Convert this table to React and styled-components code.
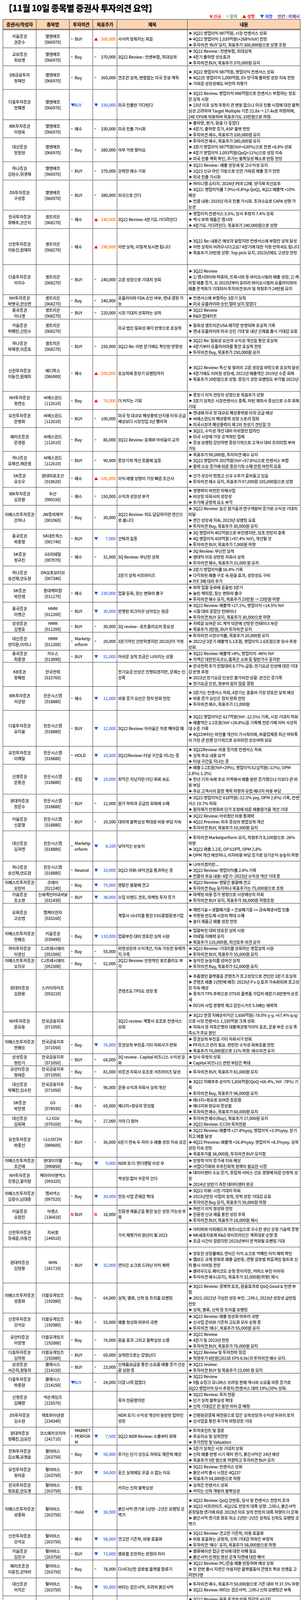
import React from 'react';
import styled, { createGlobalStyle } from 'styled-components';

const LH = 15.34;
const COLS = '85px 85px 60px 62px 180px 1fr';

const GlobalStyle = createGlobalStyle`
  *, *::before, *::after { box-sizing: border-box; }
  html, body { margin: 0; padding: 0; background: #fff; }
  body {
    font-family: "Noto Sans CJK KR", "Noto Sans", sans-serif;
    color: #000;
  }
`;

const Page = styled.div`
  width: 773px;
  padding: 0 4px 6px 7px;
`;

const TitleBar = styled.h1`
  margin: 0;
  height: 34px;
  padding: 4px 0 0 3px;
  font-size: 22px;
  line-height: 30px;
  font-weight: 900;
  letter-spacing: -0.6px;
  color: #000;
`;

const Legend = styled.div`
  display: flex;
  justify-content: flex-end;
  gap: 13px;
  height: 15px;
  padding-right: 2px;
  font-size: 10.5px;
  line-height: 15px;
  font-weight: 700;
`;

const LegendItem = styled.span`
  color: ${p => p.$c};
`;

const Table = styled.div`
  width: 762px;
  border-left: 1px solid #333;
  border-right: 1px solid #333;
`;

const HeaderRow = styled.div`
  display: grid;
  grid-template-columns: ${COLS};
  height: 28px;
  background: #fbd4b4;
  border-top: 1px solid #333;
  border-bottom: 3px double #333;
`;

const HeadCell = styled.div`
  display: flex;
  align-items: center;
  justify-content: center;
  font-size: 12px;
  font-weight: 700;
  letter-spacing: -0.5px;
  color: #000;
  border-right: 1px solid #333;
  &:last-child { border-right: none; }
`;

const Row = styled.div`
  display: grid;
  grid-template-columns: ${COLS};
  min-height: ${p => p.$h * LH}px;
  border-bottom: ${p => (p.$thick ? '2px solid #9a9a9a' : '1px solid #333')};
  font-size: 10.5px;
  font-weight: 500;
  letter-spacing: -0.2px;
`;

const Cell = styled.div`
  display: flex;
  align-items: center;
  border-right: 1px solid #333;
  min-width: 0;
  &:last-child { border-right: none; }
`;

const StackCell = styled(Cell)`
  flex-direction: column;
  justify-content: center;
  white-space: nowrap;
  line-height: 15px;
  text-align: center;
  color: #1a1a1a;
`;

const RatingCell = styled(Cell)`
  padding-left: 3px;
  line-height: 15px;
`;

const Sym = styled.span`
  flex: none;
  display: inline-block;
  width: ${p => (p.$k === 'v' ? '8px' : '10px')};
  color: ${p => SYM_COLOR[p.$k]};
  font-size: ${p => (p.$k === '=' ? '9px' : '10px')};
  font-weight: 700;
`;

const RatingText = styled.span`
  display: block;
  max-width: 41px;
  word-break: break-all;
  color: ${p => (p.$down ? '#2f5bea' : '#1a1a1a')};
`;

const PriceCell = styled(Cell)`
  justify-content: space-between;
  padding: 0 3px 0 3px;
  line-height: 15px;
`;

const PriceSym = styled.span`
  color: ${p => SYM_COLOR[p.$k]};
  font-size: ${p => (p.$k === '=' ? '9px' : '10px')};
  font-weight: 700;
`;

const Price = styled.span`
  color: ${p => PRICE_COLOR[p.$k] || '#1a1a1a'};
`;

const TitleCell = styled(Cell)`
  padding: 0 2px 0 2px;
  line-height: 15px;
  color: #1a1a1a;
`;

const ContentCell = styled(Cell)`
  flex-direction: column;
  align-items: stretch;
  justify-content: center;
  padding: 0 2px 0 2px;
  line-height: 15px;
  color: #1a1a1a;
`;

const Item = styled.div`
  word-break: normal;
`;

const Bullet = styled.span`
  display: inline-block;
  width: 12px;
  padding-left: 2px;
  font-size: 8px;
  color: #111;
  vertical-align: 1px;
`;

const SYM_COLOR = { '=': '#1f9d35', v: '#2150ee', '^': '#ff0000', N: '#ff0000' };
const PRICE_COLOR = { '^': '#ff6a00', v: '#3561e6' };
const SYM_CHAR = { '=': '=', v: '▼', '^': '▲', N: 'N' };

const D = [
  ['키움증권','권준수','엘앤에프','066970','=','BUY','^','300,000','서서히 맞춰지는 퍼즐',['3Q22 영업이익 987억원, 시장 컨센서스 상회','4Q22 영업이익 1,039억원(+268%YoY) 전망','투자의견 ‘BUY’유지, 목표주가 300,000원으로 상향 조정'],3],
  ['교보증권','최보영','엘앤에프','066970','=','Buy','=','370,000','3Q22 Review : 컨센부합, 최대실적',['3Q22 Review : 컨센부합, 최대실적','4분기 출하량 상승효과','투자의견 BUY, 목표주가 370,000원 유지'],3],
  ['DB금융투자','정재헌','엘앤에프','066970','=','Buy','=','360,000','견조한 실적, 변함없는 미국 증설 계획',['3Q22 영업이익 987억원, 영업이익 컨센서스 상회','4Q22E 영업이익 1,090억원, EV 양극재 출하량 성장 지속 전망','가파른 성장성에도 여전히 저평가'],4,1],
  ['다올투자증권','전혜영','엘앤에프','066970','v','BUY','v','330,000','미국 진출만 기다린다',['3Q22 Review. 영업이익 986억원으로 컨센서스 부합하는 양호한 실적 시현','23년 이후 실적 추정치 큰 변동 없으나 미국 진출 시점에 대한 불확실성 고려하여 Target Multiple 기존 21.8x→ 17.4x로 하향하며, 24E EPS에 적용하여 목표주가도 33만원으로 하향.'],5],
  ['IBK투자증권','이현욱','엘앤에프','066970','=','매수','=','330,000','미국 진출 가시화',['출하량, 판가, 환율 다 좋았다','4분기, 출하량 증가, ASP 플렛 전망','투자의견 매수, 목표주가 330,000원 유지'],3],
  ['대신증권','전창현','엘앤에프','066970','=','Buy','=','380,000','아무 걱정 말아요',['투자의견 매수, 목표주가 380,000원 유지','3분기 영업이익 987억원(YoY+630%)으로 컨센 +8.8% 상회','4분기 영업이익 1,093억원(QoQ+11%)으로 성장 지속','미국 진출 계획 확인, 주가는 불확실성 해소로 반등 전망'],4,1],
  ['하나증권','김현수,위경재','엘앤에프','066970','=','BUY','=','370,000','강력한 매수 기회',['3Q22 Review : 매출 성장세 및 고수익성 유지','1Q23 신규 라인 가동으로 인한 가파른 매출 증가 전망','미국 진출 가시화'],3,1],
  ['DS투자증권','구성중','엘앤에프','066970','=','BUY','=','380,000','미국으로 간다',['하이니켈 쇼티지. 2024년 PER 12배. 양극재 최선호주','3Q22: 영업이익률 7.9%(+0.8%p QoQ), 4Q22 매출액 +10% 예상','컨콜 내용: 2025년 미국 진출 가시화. 초과수요로 CAPA 상향 가능성'],5,1],
  ['한국투자증권','위해주,강은지','셀트리온','068270','=','매수','^','240,000','3Q22 Review: 4분기도 기다려진다',['영업이익 컨센서스 3.5%, 당사 추정치 7.4% 상회','역시 주력 제품은 램시마','4분기도 기다려진다. 목표주가 240,000원으로 상향'],3,1],
  ['신한투자증권','이동건,원재희','셀트리온','068270','=','매수','^','290,000','이번 실적, 이렇게 보시면 됩니다',['3Q22 Re: 내용은 예상과 달랐지만 컨센서스에 부합한 실적 달성','이번 실적이 어려우시다고요? 4분기에 대한 걱정 안하셔도 됩니다','목표주가 29만원 상향. Top pick 유지, 2023년에도 고성장 전망'],6],
  ['다올투자증권','이지수','셀트리온','068270','=','BUY','=','240,000','고른 성장으로 기대치 상회',['3Q22 Review','1) 램시마IV와 허쥬마, 트룩시마 등 바이오시밀러 매출 성장, 2) 케미컬 매출 증가, 3) 2023년부터 휴미라 바이오시밀러 유플라이마의 매출 본격화가 기대되어 투자의견 BUY 및 적정주가 24만원 유지'],5],
  ['NH투자증권','박병국,한승연','셀트리온','068270','=','Buy','=','240,000','유플라이마 FDA 승인 여부, 연내 결정 가능',['컨센서스에 부합하는 3분기 실적','미국 유플라이마 승인 얼마 남지 않았다'],2],
  ['흥국증권','이나경','셀트리온','068270','=','BUY','=','220,000','시장 기대치 상회하는 실적',['3Q22 Review','R&D 업데이트'],2,1],
  ['키움증권','허혜민,신민수','셀트리온','068270','','','','','미국 법인 일회성 매각 반영으로 호실적',['일회성 셀트리온USA 매각분 반영되며 호실적 기록','연내 유플라이마 미국 승인 기대 및 내년 신제품 출시 기대감 유효'],3,1],
  ['하나증권','박재경,이준호','셀트리온','068270','=','BUY','=','250,000','3Q22 Re: 이번 분기에도 확인된 방향성',['3Q22 Re: 일회성 요인과 수익성 개선을 통한 호실적','4분기부터 유플라이마를 통한 호실적 전망','투자의견 Buy, 목표주가 250,000원 유지'],3,1],
  ['신한투자증권','이동건,원재희','메디톡스','086900','=','매수','^','200,000','호실적에 중장기 모멘텀까지',['3Q22 Review: 톡신 및 필러의 고른 성장을 바탕으로 호실적 달성','4분기에도 이어질 성장세, 2022년 매출액은 2019년 수준 회복','목표주가 20만원으로 상향. 중장기 성장 모멘텀도 부각될 2023년'],6,1],
  ['NH투자증권','정연승','씨에스윈드','112610','=','Buy','^','78,000','더 커지는 기회',['중장기 이익 전망치 상향으로 목표주가 상향','3분기 실적은 시장컨센서스 충족, 터빈 제작사 중심으로 수주 회복 기대'],3],
  ['유진투자증권','한병화','씨에스윈드','112610','=','BUY','=','100,000','미국 첫 대규모 해상풍력 단지용 타워 공급 예상보다 시장진입 3년 빨라져',['연내에 미국 첫 대규모 해상풍력용 타워 공급 예상','씨에스윈드의 해상풍력 성장 스토리 점화','미국시장과 해상풍력이 제 2의 전성기 견인할 것'],3],
  ['메리츠증권','문경원','씨에스윈드','112610','=','Buy','=','86,000','3Q22 Review: 호재와 아쉬움이 교차',['3Q22, 수익성 개선 대비 아쉬웠던 탑라인','미국 시장에 가장 공격적인 업체','증설 모멘텀 감안하면 중장기적으로 고객사 대비 프리미엄 부여 가능'],4],
  ['하나증권','유재선,채운샘','씨에스윈드','112610','=','BUY','=','90,000','중장기적 개선 흐름에 집중',['목표주가 90,000원, 투자의견 매수 유지','3Q22 영업이익 202억원(YoY +57.8%)으로 컨센서스 부합','풍력 수요 증가에 따른 중장기적 수혜 관점 여전히 유효'],3],
  ['SK증권','유승우','현대미포조선','010620','=','매수','^','105,000','이익 레벨 상향이 가장 빠른 조선사',['선가 상승이 멈췄고 신규 수주가 줄어들고 있음','투자의견 매수 유지, 목표주가 97,000원 105,000원으로 상향'],3],
  ['IBK투자증권','김장원','두산','000150','=','매수','=','150,000','수익과 성장성 부각',['경쟁력이 여전한 자체사업','비상장 자회사의 성장성','주가에 긍정적 요소 부각'],3],
  ['이베스트투자증권','강하나','JW중외제약','001060','=','Buy','=','30,000','3Q22 Review: 저도 답답하지만 연간으로 봅니다',['3Q22 Review: 높은 원가율과 연구개발비 증가로 수익성 기대치 미달','연간 성장세 지속, 2023년 모멘텀 유효','투자의견 Buy, 목표주가 30,000원 유지'],4,1],
  ['흥국증권','박종렬','SK네트웍스','001740','=','BUY','v','7,000','선택과 집중',['3Q 영업이익 402억원으로 부진했지만, 당초 전망치 충족','4Q 영업이익 420억원 (+97.4% YoY), 개선될 것','투자의견 BUY, 목표주가 7,000원 하향'],3,1],
  ['SK증권','정규진','GS리테일','007070','=','매수','=','31,000','3Q Review: 무난한 실적',['3Q Review: 무난한 실적','엔데믹 이후 상반된 자회사 실적','투자의견 매수, 목표주가 31,000 원 유지'],3,1],
  ['하나증권','송선재,안도현','DN오토모티브','007340','','','','','3분기 실적 서프라이즈',['3분기 영업이익률 16.4% 기록','다각화된 매출 구조 속 환율 효과, 성장성도 구비','P/E 3배 대의 주가'],3],
  ['SK증권','박한샘','롯데케미칼','011170','=','매수','v','230,000','업황 둔화, 찾는 변화의 출구',['화학 업황 둔화에 흔들린 3분기','눌린 케미칼, 찾는 변화의 출구','투자의견 매수 유지, 목표주가 25만원 → 23만원 하향'],3],
  ['흥국증권','이병근','HMM','011200','=','BUY','v','30,000','반영된 피크아웃 남아있는 현금',['3Q22 Review: 매출액 +27.1%, 영업이익 +14.5% YoY','시황 대비 좋았던 컨테이너','투자의견 BUY 유지, 목표주가 30,000으로 하향'],3],
  ['삼성증권','김영호','HMM','011200','=','BUY','=','30,000','3Q review - 포트폴리오의 중요성',['저력을 보여준 SC 계약 덕분에 선방한 컨테이너 부문','목표주가 3만원, BUY 투자의견 유지'],2],
  ['대신증권','양지환,이지니','HMM','011200','=','Marketperform','=','20,000','3분기까진 선방하였지만 2023년이 걱정',['투자의견 시장수익률, 목표주가 20,000원 유지','2022년 3분기 매출액 5.1조원, 영업이익 2.6조원으로 당사 추정 상회'],3],
  ['흥국증권','최종경','지누스','013890','=','BUY','v','51,000','아쉬운 실적 조금은 나아지는 상황',['3Q22 Review: 매출액 +4%, 영업이익 -46% YoY','지역은 대한민국/EU, 품목은 소파 등 일반가구 좋지만'],2],
  ['KB증권','정혜정','한국전력','015760','','','','','전기요금 인상은 진행되겠지만, 문제는 인상폭',['한국전력 주가 전일대비 8.77% 급등: 전기요금 인상에 대한 기대감 반영 추정','2023년 전기요금 인상은 불가피한 상황. 관건은 증가폭','전기요금 인상, 정부의 쉽지 않을 결정'],4],
  ['IBK투자증권','이상현','한온시스템','018880','=','매수','v','11,000','비용 증가 요인은 점차 완화 전망',['3분기는 컨센서스 하회, 4분기는 올들어 가장 양호한 실적 예상','비용 증가 요인은 점차 완화 전망','투자의견 매수, 목표주가 11,000원'],4],
  ['다올투자증권','유지웅','한온시스템','018880','=','BUY','v','12,000','3Q22 Review: 아쉬움은 뒤로 해야할 때',['3Q22 영업이익은 617억원(YoY -12.5%) 기록, 시장 기대치 하회','매출액은 2.2조원(YoY +28.8%)을 기록해 전분기에 이어 사상최대 수준 기록','4Q22부터는 마진률 개선이 가시적이며, 부품업체중 최근 하락폭이 가장 큰 만큼 단기적으로 유의미한 상승여력 보유'],6],
  ['유진투자증권','이재일','한온시스템','018880','=','HOLD','v','10,500','3Q22Review: 터널 구간을 지나는 중',['3Q22Review: 비용 증가로 컨센서스 하회','실적 주요 내용 요약','터널 구간을 지나는 중'],3],
  ['신영증권','문용권','한온시스템','018880','=','중립','v','10,000','최악은 지났지만 더딘 회복 속도',['매출 2.2조원(YoY+29%), 영업이익 62십억원(-12%), OPM 2.8%(-1.3%)','전년 기저 속에 주요 지역에서 매출 동반 증가했으나 이보다 큰 비용 부담','주요 고객사의 물량 계획 하향과 유럽 에너지 비용 부담'],5,1],
  ['현대차증권','장문수','한온시스템','018880','=','BUY','=','12,000','원가 하락과 공급망 회복에 수혜',['3Q22 영업이익은 618억원(-12.5% yoy, OPM 2.8%) 기록, 컨센서스 19.7% 하회','원자재가 안정화와 단가 조정에 따른 매출원가율 개선 기대'],3,1],
  ['키움증권','신윤철','한온시스템','018880','=','BUY','=','10,500','대외적 불확실성 확대로 비용 부담 지속',['3Q22 Review: 아쉬웠던 비용 통제력','4Q22 Preview: 미주 중심의 영업실적 개선','투자의견 BUY, 목표주가 10,500원 유지'],3,1],
  ['대신증권','김귀연','한온시스템','018880','=','Marketperform','v','8,100','낮아지는 눈높이',['투자의견 Marketperform 유지, 적정주가 8,100원으로 -26% 하향','3Q22 매출 2.2조, OP 618억, OPM 2.8%','OPM 개선 예상하나, 이자비용 부담 증가로 당기순익 눈높이 하향'],5],
  ['하나증권','송선재,안도현','한온시스템','018880','=','Neutral','v','10,000','3Q22 리뷰: 바닥권을 통과하는 중',['나아지겠지만...','3Q22 Review: 영업이익률 2.8% 기록','컨콜의 주요 내용: 4분기~2023년 수익성 개선 기대 중'],3],
  ['이베스트투자증권','오린아','코웨이','021240','=','Buy','v','75,000','렌탈은 불황에 견고',['3Q22 Review: 렌탈은 불황에 견고','투자의견 Buy 유지하나 목표주가는 75,000원으로 조정'],2],
  ['키움증권','조소정','신세계인터내셔날','031430','=','BUY','v','38,000','수입 브랜드 견조, 마케팅 투자 증가',['마케팅 비용 증가 영향으로 시장예상치 하회','투자의견 BUY 유지, 목표주가 38,000원 하향조정'],2],
  ['유화증권','고승범','엠케이전자','033160','','','','','계열사 시너지를 통한 ESG종합환경기업',['제련기술 + 생활폐기물 + 건설폐기물 => 금속재생사업 진출','차량용 반도체 시장의 확대 수혜','솔더 제품군 매출 성장 전망'],4],
  ['이베스트투자증권','전배승','키움증권','039490','=','Buy','v','110,000','업황부진 대비 양호한 실적 시현',['업황부진 대비 양호한 실적 시현','리테일 지배력 유지','목표주가 110,000원, 최선호주 의견 유지'],3],
  ['하이투자증권','이경신','CJ프레시웨이','051500','=','Buy','=','55,000','외형성장과 수익개선, 지속 가능한 동력까지 구축',['3Q22 Review: 기대치를 상회하는 영업실적 시현','투자의견 BUY, 목표주가 55,000원 유지'],2],
  ['이베스트투자증권','오지우','CJ프레시웨이','051500','=','Buy','=','52,000','3Q22 Review: 안정적인 포트폴리오 부각',['높아진 눈높이를 넘어선 실적','투자의견 Buy, 목표주가 52,000원 유지'],2,1],
  ['현대차증권','김현용','스카이라이프','053210','','','','','콘텐츠도 TPS도 성장 중',['주춤했던 플랫폼을 콘텐츠가 초고성장으로 견인한 3분기 호실적','콘텐츠 매출 1년만에 배증: 2023년 P x Q 효과 가속화되며 초고성장 지속 예상','중저가 TPS 주력으로 OTS외 플랫폼 가입자 매분기 8만명씩 순증세','미디어 사업 경쟁력 제고 감안시 P/E 5.5배는 매력적'],7],
  ['NH투자증권','윤유동','한국금융지주','071050','','','','','3Q22 review: 계열사 호조로 컨센서스 상회',['3Q22 연결 지배순이익은 1,656억원(-78.0% y-y, +67.4% q-q)으로 시장 컨센서스 1,195억원 크게 상회','자회사 중 저축은행의 대출채권평가이익 호조, 운용 부문 손실 폭 축소가 주요 원인'],4],
  ['이베스트투자증권','전배승','한국금융지주','071050','=','Buy','v','76,000','증권실적 부진을 기타 자회사가 만회',['증권실적 부진을 기타 자회사가 만회','PF리스크 관리 필요. 완만한 수익성 회복흐름 전망','목표주가 76,000원으로 11% 하향. 매수의견 유지'],3],
  ['삼성증권','정민기','한국금융지주','071050','=','BUY','=','68,000','3Q review - Capital 비즈니스 수익성 둔화',['당사 추정치 상회','Capital 비즈니스 관련 부담은 확대'],2],
  ['유안타증권','정태준','한국금융지주','071050','=','Buy','=','81,000','비증권 자회사 호조로 서프라이즈 달성',['투자의견 BUY, 목표주가 81,000원 유지'],2,1],
  ['대신증권','박혜진,임수진','한국금융지주','071050','=','Buy','=','96,000','운용 수익과 자회사 실적 개선',['3Q22 지배주주 순이익 1,656억원(QoQ +66.4%, YoY -78%) 기록','투자의견 Buy, 목표주가 96,000원 유지'],3,1],
  ['SK증권','박한샘','GS','078930','=','매수','=','60,000','에너지+정유의 앙상블',['에너지+정유로 보여준 튼튼함','에너지와 정유의 앙상블','투자의견 매수, 목표주가 60,000원 유지'],3,1],
  ['대신증권','김회재','CJ CGV','079160','=','Buy','=','27,000','거의 다 왔어',['투자의견 매수(Buy), 목표주가 27,000원 유지','3Q22 Review: 드디어 흑자전환'],2],
  ['유진투자증권','박종선','나스미디어','089600','=','BUY','=','36,000','6분기 연속 두 자리 수 매출 성장 지속 성공',['3Q22 Review: 매출액 +27.8%yoy, 영업이익 +3.9%yoy. 분기 최고 매출 달성','4Q22 Preview: 매출액 +16.4%yoy. 영업이익 +8.5%yoy. 실적 성장 지속 전망','목표주가를 36,000원, 투자의견 BUY 유지함'],5],
  ['이베스트투자증권','조은애','현대이지웰','090850','=','Buy','v','9,000','NDR 후기: 펀더멘탈 이상 무',['안정적 이익 증가세 지속 예상','사업다각화와 주주친화적 정책이 필요한 시점'],2],
  ['NH투자증권','강경근,황지현','케이아이엔엑스','093320','','','','','역성장 없이 꾸준히 간다',['데이터센터 수요 증가, 중립적 서비스 선호 경향에 따른 안정적 성장','2024년 상반기 과천 데이터센터 완공'],3],
  ['이베스트투자증권','김광수,남대종','엠씨넥스','097520','=','Buy','v','39,000','전장 사업 존재감 확대',['3Q22 리뷰: 시장 기대치 하회','2023년전장 사업의 질적, 양적 성장 기대감 유효','투자의견 Buy 유지, 목표주가 39,000원 하향'],3],
  ['키움증권','오현진','아셈스','136410','N','BUY','N','18,000','친환경 제품군을 통한 높은 성장 가능성 주목',['하반기 이익 정상화 전망','친환경 신규 제품 통한 성장 주목','투자의견 BUY, 목표주가 18,000원 제시'],3],
  ['신한투자증권','장세훈,이동건','지씨셀','144510','','','','','가치 재평가의 원년이 될 2023',['아티바와 아피메드의 파트너십으로 우수한 생산 공정 기술력 증명','NK세포치료제 R&D 파이프라인은 계획대로 순항 중','조금 시간이 걸렸지만 2023년부터 본격화될 모멘텀 기대'],4],
  ['현대차증권','김현용','NHN','181710','=','BUY','v','32,000','연이은 쇼크로 드러난 이익 체력',['양호한 성장률에도 연이은 이익 쇼크로 약해진 이익 체력 확인','웹보드 규제 완화로 매출 급반등, 연말 글로벌 퍼즐게임 필두로 신작 출시 이어질 전망','클라우드도 페이코도 순항 중이지만, 커머스 부진 아쉬워','투자의견 매수(유지), 목표주가 32,000원(하향) 제시'],6],
  ['이베스트투자증권','성종화','더블유게임즈','192080','=','Buy','=','64,000','실적, 밸류, 신작 등 트리플 모멘텀',['3Q22 Review: 결제액 호조, 환율효과로 QoQ Good & 컨센 부합','2021-2022년 극심한 성장 부진. 그러나, 2023년 성장성 급반등 전망','실적, 밸류, 신작 등 트리플 모멘텀'],5],
  ['신한투자증권','강석오','더블유게임즈','192080','=','매수','=','55,000','매출 정상화 마무리 국면',['3Q22 Review: 매출 정상화 마무리 국면','신사업 준비와 기존작 고도화 모두 순항 중','투자의견 ‘매수’, 목표주가 55,000원 유지'],3],
  ['유안타증권','이창영','더블유게임즈','192080','=','Buy','=','76,000','환율 효과 그리고 불확실성 소멸',['3Q22 Review','4분기 및 2023년 전망','투자의견 BUY, 목표주가 76,000원 유지'],3],
  ['다올투자증권','김하정','더블유게임즈','192080','=','BUY','=','60,000','실적만으로는 감질난다',['3Q22 Review 및 투자전략 점검','적정주가 6만원(2023E EPS 8.0x)과 투자의견 매수 유지.'],2],
  ['삼성증권','서근희,정동희','클래시스','214150','=','BUY','=','23,000','신제품보급을 통한 소모품 매출 증가 선순환 실현 중',['3Q22 review:','투자의견 BUY 및 목표주가 23,000 원 유지'],2],
  ['다올투자증권','박종현','클래시스','214150','v','BUY','=','24,000','더할 나위 없었다',['3Q22 Review','9월 슈링크 유니버스 브라질 판매 개시와 소모품 비중 증가로 3Q22 영업이익 당사 추정치/컨센서스 대비 19%/20% 상회.'],3],
  ['신영증권','김혜령','넥슨게임즈','225570','','','','','흑자 전환했지만',['3Q22 Review: 흑자 전환','단기 실적 불확실성 확대','신작 기대감은 한 동안 쉬어 갈 예정'],3],
  ['DS투자증권','김수현','헥토파이낸셜','234340','','','','','NDR 후기: 수익성 개선이 동반된 탑라인 성장',['간편현금결제 재전환으로 잡은 실적성장과 수익성 두마리 토끼','신사업을 통한 추가적 외형성장 기대'],3],
  ['현대차증권','정혜진,김유진','코스메카코리아','241710','=','MARKET PERFORM','v','7,500','3Q22 NDR Review: 수출부터 회복',['투자포인트 및 결론','주요이슈 및 실적전망','주가전망 및 Valuation'],3],
  ['한화투자증권','김소혜,유영솔','펄어비스','263750','=','Buy','v','50,000','주가는 단기 상승도 하락도 제한적 예상',['3분기 실적은 시장 기대치 상회','신작 매출 반영 시기 재차 연기, 붉은사막은 24년 예상','목표주가 5만 원으로 하향하고 투자의견 BUY 유지'],3,1],
  ['유진투자증권','정의훈','펄어비스','263750','=','BUY','v','54,000','좋은 실적에도 웃을 수 없는 이유',['3Q22 Review: 컨센서스 상회','붉은사막 출시 시점은 4Q23?','목표주가 54,000원으로 하향'],3,1],
  ['한국투자증권','정호윤,안도영','펄어비스','263750','=','중립','','','커지는 신작 불확실성',['실적은 컨센서스 상회','커지는 신작 개발의 불확실성'],2],
  ['이베스트투자증권','성종화','펄어비스','263750','=','Hold','v','38,000','붉은사막 연기로 1년반 - 2년은 모멘텀 공백기',['3Q22 Review: QoQ 강반등, 당사 및 컨센서스 전망치 초과','3Q22 서프라이즈. 4Q22도 전망치 대폭 상향. 그러나, 붉은사막 론칭일정 연기에 따른 2023년 이후 실적 전망치 대폭 하향이 더 문제','붉은사막 연기로 향후 최소 1년반~2년은 실적도 신작도 모멘텀 공백기'],6],
  ['신한투자증권','강석오','펄어비스','263750','=','매수','v','58,000','견고한 기존작, 비용 효율화',['3Q22 Review: 견고한 기존작, 비용 효율화','비용 효율화는 긍정적, 신작 기대감 하락은 부정적','투자의견 ‘매수’ 유지, 목표주가 58,000원으로 하향'],3],
  ['키움증권','김진구','펄어비스','263750','=','BUY','v','73,000','밸류를 조망하는 관점의 차이',['밸류에이션 접근 방식에 대한 이해 필요','붉은사막 인게임 영상 공개 지연에 대한 해석'],2],
  ['메리츠증권','이효진,강하라','펄어비스','263750','=','Buy','=','78,000','다사다난한 글로벌 플랫폼 합류기',['3Q22 Review: PC/콘솔 매출 반등하며 예상 상회','또 한번 출시 지연은 아쉽지만 플랫폼들의 콘텐츠 확보 전쟁을 고려한다면'],3],
  ['대신증권','이지은','펄어비스','263750','=','Buy','v','50,000','버티는 검은사막, 우려의 붉은사막',['투자의견 매수, 목표주가 50,000원으로 기존 대비 약 37.5% 하향','3Q22 Review: 버티는 검은사막, 그러나 신작 모멘텀은 부족'],3],
  ['신영증권','김혜령','펄어비스','263750','=','중립','v','41,000','진주는 어디에...',['3Q22 Review: 환율 효과와 비용 절감의 시너지','아쉬운 ‘붉은사막’ 톤다운','투자의견 중립, 적정주가 41,000원으로 하향'],3],
  ['DB금융투자','황현준','펄어비스','263750','=','Buy','v','53,000','3Q22 Review: 실적은 좋았으나',['매출액, 영업이익 모두 컨센서스 상회하는 실적 시현','3분기 실적은 좋았으나 신작 불확실성은 여전','목표주가 5.3만으로 하향','악재는 이미 주가에 반영되었으며 콘솔 시장 진출에 대한 기대감 유효, 투자의견 BUY'],5,1],
  ['FS리서치','황세환','아이씨에이치','368600','','','','','IT에서 친환경을 찾는다면 꼭 봐야할 기업',['IT 분야의 친환경 공법 전문 기업','글로벌 기업들의 ESG 관심 증가는 동사에게 기회','친환경 공법으로 고객사 확대'],3],
];

const HEADERS = ['증권사/작성자', '종목명', '투자의견', '목표주가', '제목', '내용'];

function OpinionRow({ r }) {
  const [firm, analyst, stock, code, rs, rating, ps, price, title, items, h, thick] = r;
  return (
    <Row $h={h} $thick={!!thick}>
      <StackCell>
        <span>{firm}</span>
        <span>{analyst}</span>
      </StackCell>
      <StackCell>
        <span>{stock}</span>
        <span>[{code}]</span>
      </StackCell>
      <RatingCell>
        {rs && <Sym $k={rs}>{SYM_CHAR[rs]}</Sym>}
        {rating && <RatingText $down={rs === 'v'}>{rating}</RatingText>}
      </RatingCell>
      <PriceCell>
        {ps ? <PriceSym $k={ps}>{SYM_CHAR[ps]}</PriceSym> : <span />}
        <Price $k={ps}>{price}</Price>
      </PriceCell>
      <TitleCell>{title}</TitleCell>
      <ContentCell>
        {items.map((t, i) => (
          <Item key={i}>
            <Bullet>▶</Bullet>
            {t}
          </Item>
        ))}
      </ContentCell>
    </Row>
  );
}

export default function App() {
  return (
    <Page>
      <GlobalStyle />
      <TitleBar>【11월 10일 종목별 증권사 투자의견 요약】</TitleBar>
      <Legend>
        <LegendItem $c="#ff0000">N 신규</LegendItem>
        <LegendItem $c="#1f9d35">= 유지</LegendItem>
        <LegendItem $c="#ff0000">▲ 상향</LegendItem>
        <LegendItem $c="#2150ee">▼ 하향</LegendItem>
        <LegendItem $c="#7030a0">빈칸 : 미제시</LegendItem>
      </Legend>
      <Table>
        <HeaderRow>
          {HEADERS.map(hd => (
            <HeadCell key={hd}>{hd}</HeadCell>
          ))}
        </HeaderRow>
        {D.map((r, i) => (
          <OpinionRow key={i} r={r} />
        ))}
      </Table>
    </Page>
  );
}
